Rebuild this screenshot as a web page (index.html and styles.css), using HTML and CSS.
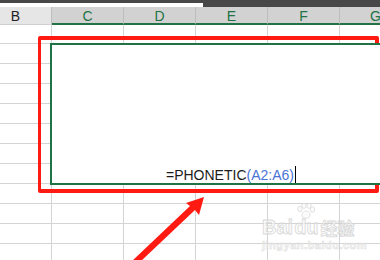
FILE: index.html
```html
<!DOCTYPE html>
<html lang="zh">
<head>
  <meta charset="UTF-8" />
  <title>PHONETIC</title>
  <link rel="stylesheet" href="styles.css">
</head>
<body>
  <div class="window">
    <div class="topbar"><div class="tab"></div></div>

    <div class="colhead">
      <div class="hd">B</div>
      <div class="hd sel">C</div>
      <div class="hd sel">D</div>
      <div class="hd sel">E</div>
      <div class="hd sel">F</div>
      <div class="hd sel">G</div>
    </div>

    <div class="sheet">
      <!-- row 1 -->
      <div class="c"></div><div class="c"></div><div class="c"></div><div class="c"></div><div class="c"></div><div class="c"></div>
      <!-- rows 2-8: merged C:G -->
      <div class="c"></div>
      <div class="merged">
        <span class="formula">=PHONETIC<span class="ref">(A2:A6)</span><span class="caret"></span></span>
      </div>
      <div class="c"></div>
      <div class="c"></div>
      <div class="c"></div>
      <div class="c"></div>
      <div class="c"></div>
      <div class="c"></div>
      <!-- rows 9-12 -->
      <div class="c"></div><div class="c"></div><div class="c"></div><div class="c"></div><div class="c"></div><div class="c"></div>
      <div class="c"></div><div class="c"></div><div class="c"></div><div class="c"></div><div class="c"></div><div class="c"></div>
      <div class="c"></div><div class="c"></div><div class="c"></div><div class="c"></div><div class="c"></div><div class="c"></div>
      <div class="c"></div><div class="c"></div><div class="c"></div><div class="c"></div><div class="c"></div><div class="c"></div>
    </div>

    <div class="callout"></div>

    <svg class="arrow" width="380" height="260" viewBox="0 0 380 260">
      <polygon points="204,197 186,203 190,206 131,262 140,262 195,210 199,215" fill="#ff1a12"/>
    </svg>

    <div class="watermark">
      <div class="logo">
        <span class="wm">Bai</span>
        <span class="paw">
          <svg width="20" height="16" viewBox="0 0 20 16">
            <ellipse cx="4" cy="6" rx="2.2" ry="2.8" />
            <ellipse cx="8" cy="2.8" rx="2.2" ry="2.6" />
            <ellipse cx="13" cy="2.8" rx="2.2" ry="2.6" />
            <ellipse cx="16.5" cy="6.5" rx="2.2" ry="2.8" />
            <path d="M10 8 C6 8 5 13 7 14.5 C9 15.5 11 15.5 13 14.5 C15 13 14 8 10 8 Z" />
          </svg>
          <span class="wm">du</span>
        </span>
        <span class="wm cn">经验</span>
      </div>
      <div class="url">jingyan.baidu.com</div>
    </div>
  </div>
</body>
</html>
```

FILE: styles.css
```css
body { margin:0; background:#fff; font-family:"Liberation Sans", Arial, sans-serif; }
.window { position:relative; width:380px; height:260px; overflow:hidden; background:#fff; }

.topbar { height:7px; background:#484848; display:flex; align-items:flex-end; }
.tab { width:203px; height:4px; background:#fff; }

.colhead, .sheet { display:grid; grid-template-columns:repeat(6, 72px); margin-left:-20px; width:432px; }
.hd { height:18px; box-sizing:border-box; background:#e6e6e6; border-right:1px solid #bdbdbd; border-bottom:1px solid #cfcfcf; font-size:14px; line-height:16px; padding-top:1px; text-align:center; color:#222; }
.hd.sel { background:#d2d2d2; border-bottom:2px solid #217346; color:#217346; }

.sheet { grid-template-rows:19px repeat(11, 20px); }
.c { box-sizing:border-box; border-right:1px solid #d4d4d4; border-bottom:1px solid #d4d4d4; }
.merged { grid-column:2 / 7; grid-row:2 / 9; z-index:1; margin:-1px 0 -1px -2px; box-sizing:border-box; border:2px solid #217346; background:#fff; display:flex; align-items:flex-end; justify-content:center; }
.formula { font-size:14px; line-height:16px; color:#1c1c1c; white-space:nowrap; }
.ref { color:#4a74d4; }
.caret { display:inline-block; width:1px; height:17px; background:#000; vertical-align:bottom; margin-left:1px; }

.callout { position:absolute; left:38px; top:36px; width:341px; height:157px; box-sizing:border-box; border:4px solid #ff1a12; border-left-width:3px; border-radius:2px; }
.arrow { position:absolute; left:0; top:0; }

.watermark { position:absolute; left:262px; top:203px; display:flex; flex-direction:column; align-items:flex-start; opacity:.8; }
.logo { display:flex; align-items:flex-end; }
.wm { font-size:20px; font-weight:bold; line-height:17px; color:#fbfbfb; -webkit-text-stroke:0.8px #cfcfcf; }
.wm.cn { font-family:"Noto Sans CJK SC", sans-serif; font-size:17px; margin-left:2px; }
.paw { display:flex; flex-direction:column; align-items:center; margin-left:1px; }
.paw svg { fill:#fbfbfb; stroke:#cfcfcf; stroke-width:0.8; }
.url { font-size:11px; font-weight:bold; color:#f4f4f4; -webkit-text-stroke:0.5px #d6d6d6; margin-top:3px; letter-spacing:0.5px; }
```
